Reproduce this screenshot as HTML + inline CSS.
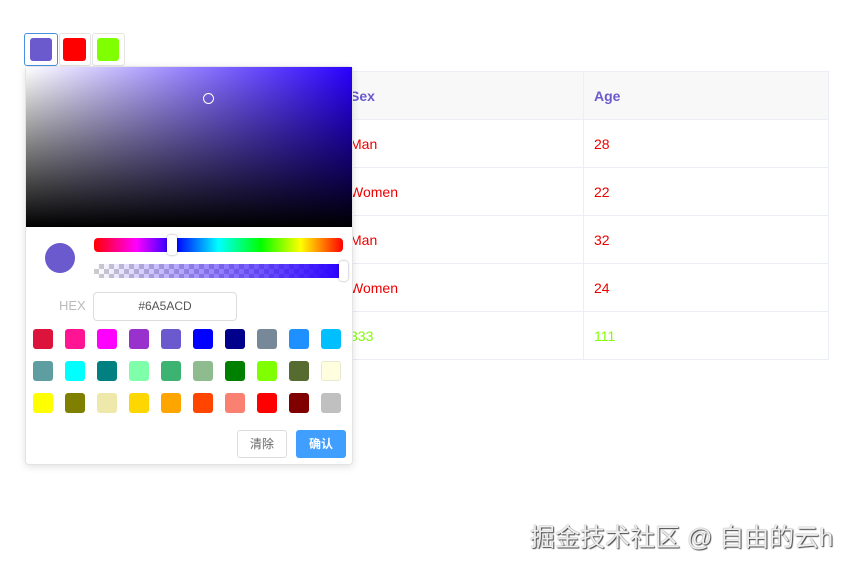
<!DOCTYPE html>
<html><head><meta charset="utf-8"><style>
*{box-sizing:border-box;margin:0;padding:0}
body{width:849px;height:565px;background:#fff;font-family:"Liberation Sans","Noto Sans CJK SC",sans-serif;position:relative;overflow:hidden}
.a{position:absolute}
table{position:absolute;left:25px;top:71px;width:804px;border-collapse:collapse;font-size:14px}
td{border:1px solid #ebeef5;height:48px;padding-left:10px}
tr.h td{background:#f8f8f9;color:#6a5acd;font-weight:bold}
td.c1{width:314px}td.c2{width:244px}
.r td{color:#e00}
.g td{color:#7fff00}
.sw{position:absolute;width:20px;height:20px;border-radius:3px}
</style></head><body>
<table>
<tr class="h"><td class="c1">Name</td><td class="c2">Sex</td><td>Age</td></tr>
<tr class="r"><td></td><td>Man</td><td>28</td></tr>
<tr class="r"><td></td><td>Women</td><td>22</td></tr>
<tr class="r"><td></td><td>Man</td><td>32</td></tr>
<tr class="r"><td></td><td>Women</td><td>24</td></tr>
<tr class="g"><td></td><td>333</td><td>111</td></tr>
</table>
<div class="a" style="left:24px;top:33px;width:34px;height:33px;border:1px solid #4a90e2;border-radius:3px"></div>
<div class="a" style="left:30px;top:38px;width:22px;height:23px;background:#6a5acd;border-radius:3px"></div>
<div class="a" style="left:59px;top:33px;width:32px;height:33px;border:1px solid #e4e4e4;border-radius:3px"></div>
<div class="a" style="left:63px;top:38px;width:23px;height:23px;background:#f00;border-radius:3px"></div>
<div class="a" style="left:92px;top:33px;width:33px;height:33px;border:1px solid #e4e4e4;border-radius:3px"></div>
<div class="a" style="left:97px;top:38px;width:22px;height:23px;background:#7fff00;border-radius:3px"></div>

<div class="a" style="left:25px;top:66px;width:328px;height:399px;background:#fff;border:1px solid #e4e4e4;border-radius:4px;box-shadow:0 2px 8px rgba(0,0,0,.12)"></div>
<div class="a" style="left:26px;top:67px;width:326px;height:160px;background:linear-gradient(to top,#000,rgba(0,0,0,0)),linear-gradient(to right,#fff,#2a00ff)"></div>
<div class="a" style="left:203px;top:93px;width:11px;height:11px;border:1px solid #fff;border-radius:50%"></div>
<div class="a" style="left:45px;top:243px;width:30px;height:30px;border-radius:50%;background:#6a5acd"></div>
<div class="a" style="left:94px;top:238px;width:249px;height:14px;border-radius:4px;background:linear-gradient(to right,#f00,#f0f 17%,#00f 33%,#0ff 50%,#0f0 67%,#ff0 83%,#f00)"></div>
<div class="a" style="left:167px;top:235px;width:10px;height:20px;background:#fff;border-radius:3px;box-shadow:0 0 2px rgba(0,0,0,.4)"></div>
<div class="a" style="left:94px;top:264px;width:249px;height:14px;background:repeating-conic-gradient(#ccc 0 25%,#fff 0 50%) 0 0/10px 10px"></div>
<div class="a" style="left:94px;top:264px;width:249px;height:14px;background:linear-gradient(to right,rgba(42,0,255,0),#2a00ff)"></div>
<div class="a" style="left:339px;top:261px;width:9px;height:20px;background:#fff;border-radius:3px;box-shadow:0 0 2px rgba(0,0,0,.4)"></div>
<div class="a" style="left:59px;top:298px;font-size:13px;color:#bbb">HEX</div>
<div class="a" style="left:93px;top:292px;width:144px;height:29px;border:1px solid #ddd;border-radius:4px;font-size:12px;color:#555;text-align:center;line-height:27px">#6A5ACD</div>

<div class="sw" style="left:33px;top:329px;background:#dc143c"></div>
<div class="sw" style="left:65px;top:329px;background:#ff1493"></div>
<div class="sw" style="left:97px;top:329px;background:#f0f"></div>
<div class="sw" style="left:129px;top:329px;background:#9932cc"></div>
<div class="sw" style="left:161px;top:329px;background:#6a5acd"></div>
<div class="sw" style="left:193px;top:329px;background:#00f"></div>
<div class="sw" style="left:225px;top:329px;background:#00008b"></div>
<div class="sw" style="left:257px;top:329px;background:#778899"></div>
<div class="sw" style="left:289px;top:329px;background:#1e90ff"></div>
<div class="sw" style="left:321px;top:329px;background:#00bfff"></div>
<div class="sw" style="left:33px;top:361px;background:#5f9ea0"></div>
<div class="sw" style="left:65px;top:361px;background:#0ff"></div>
<div class="sw" style="left:97px;top:361px;background:#008080"></div>
<div class="sw" style="left:129px;top:361px;background:#7fffaa"></div>
<div class="sw" style="left:161px;top:361px;background:#3cb371"></div>
<div class="sw" style="left:193px;top:361px;background:#8fbc8f"></div>
<div class="sw" style="left:225px;top:361px;background:#008000"></div>
<div class="sw" style="left:257px;top:361px;background:#7fff00"></div>
<div class="sw" style="left:289px;top:361px;background:#556b2f"></div>
<div class="sw" style="left:321px;top:361px;background:#ffffe0;border:1px solid #e8e8d0"></div>
<div class="sw" style="left:33px;top:393px;background:#ff0"></div>
<div class="sw" style="left:65px;top:393px;background:#808000"></div>
<div class="sw" style="left:97px;top:393px;background:#eee8aa"></div>
<div class="sw" style="left:129px;top:393px;background:#ffd700"></div>
<div class="sw" style="left:161px;top:393px;background:#ffa500"></div>
<div class="sw" style="left:193px;top:393px;background:#ff4500"></div>
<div class="sw" style="left:225px;top:393px;background:#fa8072"></div>
<div class="sw" style="left:257px;top:393px;background:#f00"></div>
<div class="sw" style="left:289px;top:393px;background:#800000"></div>
<div class="sw" style="left:321px;top:393px;background:#c0c0c0"></div>

<div class="a" style="left:237px;top:430px;width:50px;height:28px;border:1px solid #ddd;border-radius:3px;font-size:12px;color:#666;text-align:center;line-height:26px">清除</div>
<div class="a" style="left:296px;top:430px;width:50px;height:28px;background:#409eff;border-radius:3px;font-size:12px;color:#fff;text-align:center;line-height:28px;font-weight:bold">确认</div>

<div class="a" style="left:530px;top:518px;font-size:25px;color:#eee;text-shadow:1px 1px 1px #444,0 0 1px #666;white-space:nowrap">掘金技术社区 @ 自由的云h</div>
</body></html>
